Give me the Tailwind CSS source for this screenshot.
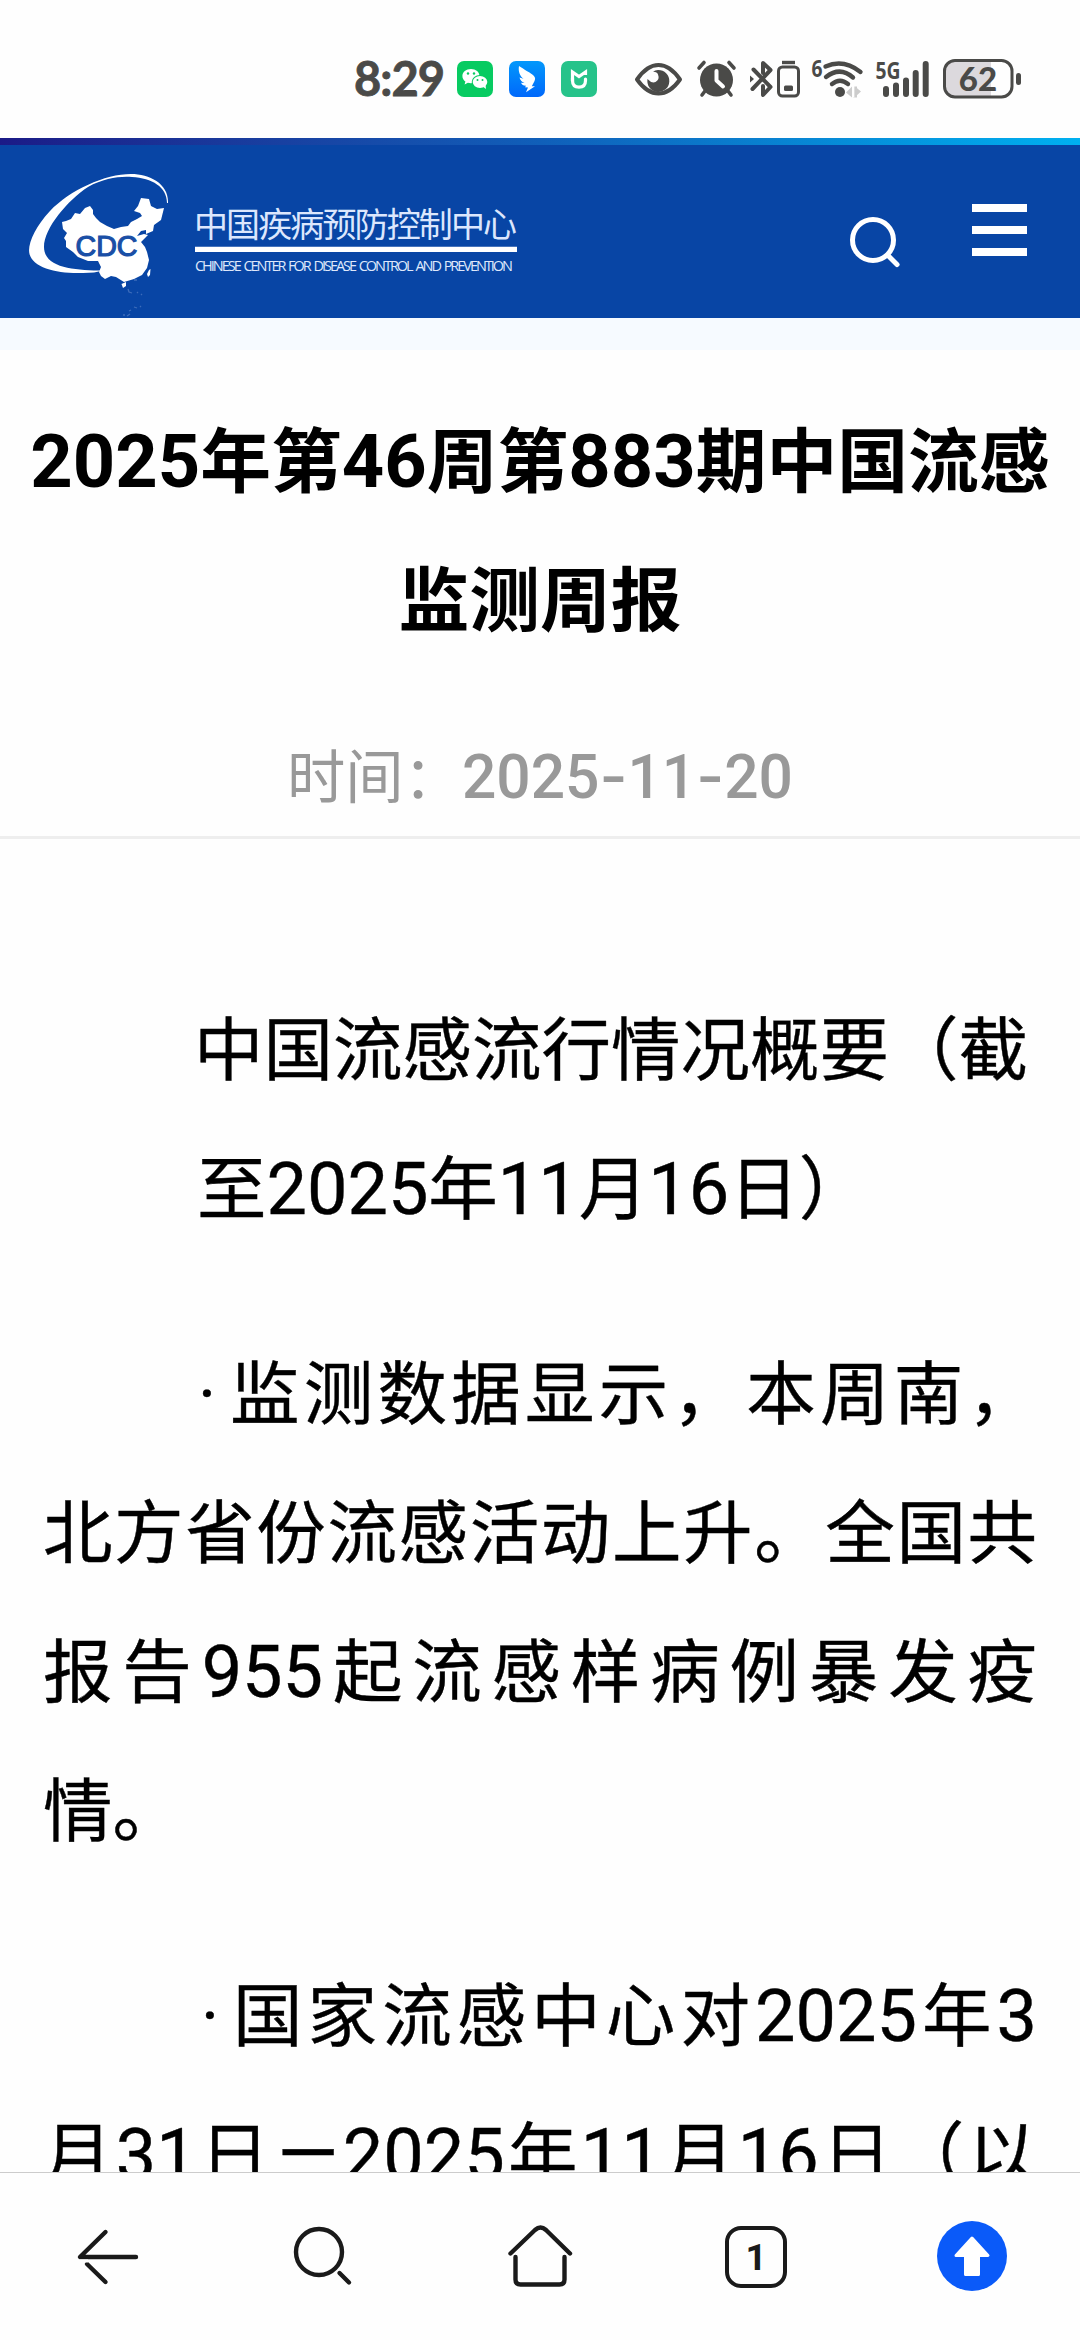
<!DOCTYPE html>
<html lang="zh-CN">
<head>
    <meta charset="UTF-8">
    <meta name="viewport" content="width=device-width, initial-scale=1.0">
    <title>2025年第46周第883期中国流感监测周报</title>
    <script src="https://cdn.jsdelivr.net/npm/@tailwindcss/browser@4"></script>
</head>
<body class="w-[1080px] h-[2340px] flex flex-col overflow-hidden bg-[#fefefe] text-black font-['Noto_Sans_CJK_SC',sans-serif]">
    <!-- 状态栏 -->
    <div class="h-[138px] shrink-0">
        <svg class="block" width="1080" height="138" viewBox="0 0 1080 138" fill="none">
            <text x="354" y="96" font-family="Lato, sans-serif" font-weight="700" font-size="47" textLength="91" fill="#4a4a48" stroke="#4a4a48" stroke-width=".8">8:29</text>

            <!-- 微信 -->
            <rect x="457" y="61" width="36" height="36" rx="7" fill="#07cb61"/>
            <path d="M471 69c-5 0-8.600 3-8.600 7 0 2.300 1.100 4.200 3 5.500l-.8 3 3.300-1.700 3 .5c4.800 0 8.600-3.200 8.600-7.200s-3.700-7.100-8.500-7.100z" fill="#fff"/>
            <ellipse cx="480" cy="82" rx="8.300" ry="7" fill="#07cb61"/>
            <ellipse cx="480" cy="82" rx="7.300" ry="6" fill="#fff"/>
            <path d="M482 86l4 3-.5-4z" fill="#fff"/>
            <g fill="#07cb61"><circle cx="468" cy="73.500" r="1.200"/><circle cx="474" cy="73.500" r="1.200"/><circle cx="477.500" cy="80" r="1"/><circle cx="482.500" cy="80" r="1"/></g>

            <!-- 钉钉 -->
            <rect x="509" y="61" width="36" height="36" rx="7" fill="url(#ding)"/>
            <path d="M519 66c5 3.500 12 7 14.500 9.500 2 2 2 3.500.8 6l-2.500 4.700h3.200l-9 6 2-4.700-3-.2 1-1.500c-3 0-4-1-5-3l3.500.2c-3-1.200-4.300-3-5-5.500l4 1.200c-3.500-2.500-5.500-7-4.500-12.700z" fill="#fff"/>

            <!-- 米家 -->
            <rect x="561" y="61" width="36" height="36" rx="7" fill="#26c38a"/>
            <path d="M572.500 81V72l6.500 4.500 6.500-4.500v3" stroke="#fff" stroke-width="3.200"/>
            <path d="M572.500 78v2.500q0 6.700 6.500 6.700 6.500 0 6.500-6.700V79" stroke="#fff" stroke-width="3.200" stroke-linecap="round"/>

            <!-- 护眼 -->
            <path d="M637 79.500Q647 65 658.500 65T680 79.500Q670 93.500 658.500 93.500T637 79.500z" stroke="#4a4a48" stroke-width="4" stroke-linejoin="round"/>
            <path d="M658 70a11 11 0 1 1-10.500 9q4 4.500 8 3 4.500-2.500 2.500-7.500-1-3-5-2.800 2-1.700 5-1.700z" fill="#4a4a48"/>

            <!-- 闹钟 -->
            <circle cx="716.500" cy="80" r="16.500" fill="#4a4a48"/>
            <path d="M699 68l5-5.500M734 68l-5-5.500M705 91l-3 4M728 91l3 4" stroke="#4a4a48" stroke-width="3.600" stroke-linecap="round"/>
            <path d="M716.500 71v9.500l6.500 6" stroke="#fff" stroke-width="4" stroke-linecap="round" stroke-linejoin="round"/>

            <!-- 蓝牙 -->
            <path d="M753.500 69.500L770.500 87l-7.500 8v-9M752.500 89L770.500 70l-7.500-7v10" stroke="#4a4a48" stroke-width="4" stroke-linecap="round" stroke-linejoin="round"/>
            <path d="M750 75.500l4 3.500-4 3.500z" fill="#4a4a48"/>
            <rect x="778.500" y="67" width="20" height="29" rx="4" stroke="#4a4a48" stroke-width="3"/>
            <path d="M782 62.500h13" stroke="#4a4a48" stroke-width="3.400"/>
            <rect x="784" y="85.500" width="9" height="5.500" rx="1.500" fill="#4a4a48"/>

            <!-- Wi-Fi -->
            <text x="811.500" y="77" font-family="Open Sans, sans-serif" font-weight="700" font-size="23" textLength="11" lengthAdjust="spacingAndGlyphs" fill="#4a4a48">6</text>
            <path d="M825.500 66.500q18-8 35 5.500M826 77q14-11 27 .5M832 84q8-6.500 16 0" stroke="#4a4a48" stroke-width="4.400" stroke-linecap="round"/>
            <circle cx="840" cy="92" r="5" fill="#4a4a48"/>
            <path d="M846 92.500l6-6v11zM855 86.500l6 5-6 5.500zM853 86.500h4v11h-4z" fill="#ccc"/>
            <path d="M853.600 86v11.500" stroke="#fff" stroke-width="1.500"/>

            <!-- 信号 -->
            <text x="875.500" y="79" font-family="Open Sans, sans-serif" font-weight="700" font-size="24" textLength="25" lengthAdjust="spacingAndGlyphs" fill="#4a4a48">5G</text>
            <path d="M886 89v5M896 85.500v8.500M906 80.500v13.500M915.700 73v21M925.700 64v30" stroke="#4a4a48" stroke-width="6" stroke-linecap="round"/>

            <!-- 电池 -->
            <path d="M991 61h-36a10.500 10.500 0 0 0-10.500 10.500v15A10.500 10.500 0 0 0 955 97h36z" fill="#dcd9dd"/>
            <rect x="944.500" y="60.500" width="67.500" height="36.500" rx="10.500" stroke="#4a4a48" stroke-width="3"/>
            <rect x="1016" y="73" width="5" height="12" rx="2.500" fill="#4a4a48"/>
            <text x="978" y="91" font-family="Lato, sans-serif" font-weight="900" font-size="33" text-anchor="middle" fill="#4a4a48">62</text>
            <defs>
                <linearGradient id="ding" x1="0" y1="0" x2="0" y2="1"><stop stop-color="#0398fb"/><stop offset="1" stop-color="#0068fb"/></linearGradient>
            </defs>
        </svg>
    </div>

    <!-- 站点头部 -->
    <div class="h-[7px] shrink-0 bg-linear-to-r from-[#1b1a87] via-[#105fb9] to-[#00b0f0]"></div>
    <header class="h-[173px] shrink-0 bg-[#0845a5] flex items-start justify-between pl-5 pr-[53px]">
        <svg class="mt-5" width="505" height="153" viewBox="20 165 505 153">
            <path d="M168 203C169 184 150 174 131 174C105 174 70 190 50 211C35 227 27 245 29.500 254C33 268 58 274 83 273Q95 273 103 270.500C75 270.500 44 268 44 247C44 228 68 200 88 187C104 178 120 176 132 177C152 178 167 187 167 203z" fill="#fff"/>
            <path d="M62 222L66 221 71 219 75 213 80 214 85 208 90 206 93 210 93 214 96 218 100 222 107 226 114 229 121 227 128 226 131 222 137 219 142 216 140 213 134 211 138 206 141 198 149 199 151 206 157 209 164 208 161 220 154 225 153 231 146 234 146 230 141 231 137 236 144 234 148 235 141 242 145 247 147 252 149 260 147 268 142 275 134 279 124 282 116 277 111 276 105 279 101 276 99 272 101 267 98 261 88 261 78 257 73 252 66 247 66 241 64 238 67 233 63 229z" fill="#fff"/>
            <path d="M121.500 284l4.500-2 0 4-3 2zM149 270l1.500-1-.5 6-2 2-1-3z" fill="#fff"/>
            <path d="M128 289l1 3 3 1M137 293l1-1M134 280h3M141 294l1 1M134 307l3 1M140 307l1-1M129 311l2-1M127 316l3-2M123 315h2" fill="none" stroke="#3c6cba" stroke-width="1.300"/>
            <text x="75.500" y="256" font-family="Liberation Sans, sans-serif" font-size="29" font-weight="400" textLength="62" lengthAdjust="spacingAndGlyphs" fill="#1a4fa6" stroke="#1a4fa6" stroke-width="1.200">CDC</text>
            <text x="194" y="237" font-family="Noto Sans CJK SC, sans-serif" font-size="34" font-weight="400" textLength="323" fill="#dce7fd">中国疾病预防控制中心</text>
            <path d="M195 246.700h322v5.300H195z" fill="#fff"/>
            <text x="195" y="271.300" font-family="Open Sans, sans-serif" font-size="14.500" word-spacing="2" textLength="318" fill="#dfe8fb">CHINESE CENTER FOR DISEASE CONTROL AND PREVENTION</text>
        </svg>
        <div class="flex items-start">
            <svg class="mt-[70px] mr-[70px]" width="53" height="53" viewBox="849 215 53 53" fill="none" stroke="#fff" stroke-width="5" stroke-linecap="round">
                <circle cx="873" cy="240" r="20.500"/>
                <path d="M888 255.500l9 9"/>
            </svg>
            <div class="mt-[59px] w-[55px] flex flex-col gap-[14px]">
                <div class="h-2 bg-white"></div>
                <div class="h-2 bg-white"></div>
                <div class="h-2 bg-white"></div>
            </div>
        </div>
    </header>
    <div class="h-8 shrink-0 bg-[#f6faff]"></div>

    <!-- 正文 -->
    <main class="flex-1 min-h-0 overflow-hidden whitespace-nowrap">
        <h1 class="pt-[37px] text-center text-[70.8px] leading-[139px] font-bold">
            <span class="block"><span class="font-[Roboto] text-[74px] leading-none">2025</span>年第<span class="font-[Roboto] text-[74px] leading-none">46</span>周第<span class="font-[Roboto] text-[74px] leading-none">883</span>期中国流感</span>
            <span class="block">监测周报</span>
        </h1>
        <div class="mt-[38px] h-[136px] border-b-3 border-[#eee] text-center text-[58.3px] leading-[139px] text-[#999]">时间：<span class="font-[Roboto] font-medium text-[60.500px] leading-none">2025<span class="font-[Inter]">-</span>11<span class="font-[Inter]">-</span>20</span></div>

        <div class="pt-[136px] px-[43px] text-[69.5px] leading-[139.3px] [-webkit-text-stroke:0.4px_black]">
            <p class="pl-[151px]">
                <span class="block">中国流感流行情况概要（截</span>
                <span class="block pl-[3px]">至<span class="font-[Roboto] text-[72px] leading-none">2025</span>年<span class="font-[Roboto] text-[72px] leading-none">11</span>月<span class="font-[Roboto] text-[72px] leading-none">16</span>日）</span>
            </p>
            <p class="mt-[65px]">
                <span class="flex pl-[155px]"><span class="w-[32px] pt-[6px] font-[Roboto]">·</span><span class="flex-1 [text-align-last:justify]">监测数据显示，本周南，</span></span>
                <span class="block -mt-[6px] [text-align-last:justify]">北方省份流感活动上升。全国共</span>
                <span class="block [text-align-last:justify]">报告<span class="font-[Roboto] text-[72px] leading-none">955</span>起流感样病例暴发疫</span>
                <span class="block">情。</span>
            </p>
            <p class="mt-[65px]">
                <span class="flex pl-[158px]"><span class="w-[32px] pt-[6px] font-[Roboto]">·</span><span class="flex-1 [text-align-last:justify]">国家流感中心对<span class="font-[Roboto] text-[72px] leading-none">2025</span>年<span class="font-[Roboto] text-[72px] leading-none">3</span></span></span>
                <span class="block -mt-[6px] [text-align-last:justify]">月<span class="font-[Roboto] text-[72px] leading-none">31</span>日<span class="inline-block w-[70px] [text-align-last:center] font-[Roboto] text-[78px] leading-none">—</span><span class="font-[Roboto] text-[72px] leading-none">2025</span>年<span class="font-[Roboto] text-[72px] leading-none">11</span>月<span class="font-[Roboto] text-[72px] leading-none">16</span>日（以</span>
            </p>
        </div>
    </main>

    <!-- 底部导航 -->
    <nav class="h-[168px] shrink-0 border-t border-[#ccc] grid grid-cols-5 justify-items-center pt-[44px]">
        <svg width="80" height="80" viewBox="68 2217 80 80" fill="none" stroke="#1a1a1a" stroke-width="4.400" stroke-linecap="round" stroke-linejoin="round">
            <path d="M105.500 2232L80 2257h56"/>
            <path d="M105.500 2282L87 2264"/>
            <path d="M80 2261h8" stroke="#fefefe" stroke-width="3" stroke-linecap="butt"/>
        </svg>
        <svg width="80" height="80" viewBox="284 2217 80 80" fill="none" stroke="#1a1a1a" stroke-width="4.400" stroke-linecap="round">
            <circle cx="319" cy="2252" r="23"/>
            <path d="M339.500 2273l9.500 9.500"/>
        </svg>
        <svg width="80" height="80" viewBox="500 2217 80 80" fill="none" stroke="#1a1a1a" stroke-width="4.400" stroke-linecap="round" stroke-linejoin="round">
            <path d="M510.500 2253.500L535 2230q5.500-5 11 0L570 2253.500"/>
            <path d="M515.500 2257v22.500q0 5 5 5h39q5 0 5-5V2257"/>
        </svg>
        <div class="mt-[9px] size-[62px] rounded-[16px] border-4 border-[#1a1a1a] text-[#1a1a1a] flex items-center justify-center font-[Roboto] font-bold text-[37px] leading-none">1</div>
        <svg width="80" height="80" viewBox="932 2217 80 80">
            <circle cx="972" cy="2256" r="35" fill="#0a5af9"/>
            <path d="M972 2238l16 17.500h-9.500V2274.500h-13V2255.500H956z" fill="#fff" stroke="#fff" stroke-width="3" stroke-linejoin="round"/>
        </svg>
    </nav>
</body>
</html>
